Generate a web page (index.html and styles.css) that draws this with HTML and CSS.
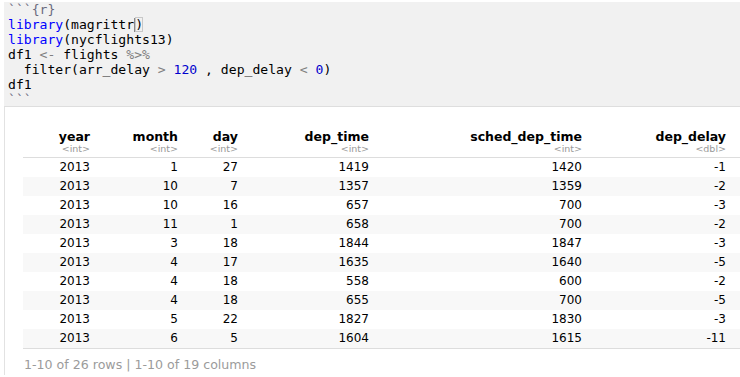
FILE: index.html
```html
<!DOCTYPE html>
<html>
<head>
<meta charset="utf-8">
<link rel="stylesheet" href="styles.css">
</head>
<body>
<div class="chunk">
<div class="line"><span class="hdr">```{r}</span></div>
<div class="line"><span class="kw">library</span>(magrittr<span class="cursor"></span><span class="match">)</span></div>
<div class="line"><span class="kw">library</span>(nycflights13)</div>
<div class="line">df1 <span class="op">&lt;-</span> flights <span class="op">%&gt;%</span></div>
<div class="line">  filter(arr_delay <span class="op">&gt;</span> <span class="num">120</span> , dep_delay <span class="op">&lt;</span> <span class="num">0</span>)</div>
<div class="line">df1</div>
<div class="line"><span class="hdr">```</span></div>
</div>
<div class="output">
  <table class="tbl">
    <colgroup>
      <col class="c1"><col class="c2"><col class="c3"><col class="c4"><col class="c5"><col class="c6"><col class="c7">
    </colgroup>
    <thead>
      <tr>
        <th><div class="name">year</div><div class="type">&lt;int&gt;</div></th>
        <th><div class="name">month</div><div class="type">&lt;int&gt;</div></th>
        <th><div class="name">day</div><div class="type">&lt;int&gt;</div></th>
        <th><div class="name">dep_time</div><div class="type">&lt;int&gt;</div></th>
        <th><div class="name">sched_dep_time</div><div class="type">&lt;int&gt;</div></th>
        <th><div class="name">dep_delay</div><div class="type">&lt;dbl&gt;</div></th>
        <th></th>
      </tr>
    </thead>
    <tbody>
      <tr><td>2013</td><td>1</td><td>27</td><td>1419</td><td>1420</td><td>-1</td><td></td></tr>
      <tr><td>2013</td><td>10</td><td>7</td><td>1357</td><td>1359</td><td>-2</td><td></td></tr>
      <tr><td>2013</td><td>10</td><td>16</td><td>657</td><td>700</td><td>-3</td><td></td></tr>
      <tr><td>2013</td><td>11</td><td>1</td><td>658</td><td>700</td><td>-2</td><td></td></tr>
      <tr><td>2013</td><td>3</td><td>18</td><td>1844</td><td>1847</td><td>-3</td><td></td></tr>
      <tr><td>2013</td><td>4</td><td>17</td><td>1635</td><td>1640</td><td>-5</td><td></td></tr>
      <tr><td>2013</td><td>4</td><td>18</td><td>558</td><td>600</td><td>-2</td><td></td></tr>
      <tr><td>2013</td><td>4</td><td>18</td><td>655</td><td>700</td><td>-5</td><td></td></tr>
      <tr><td>2013</td><td>5</td><td>22</td><td>1827</td><td>1830</td><td>-3</td><td></td></tr>
      <tr><td>2013</td><td>6</td><td>5</td><td>1604</td><td>1615</td><td>-11</td><td></td></tr>
    </tbody>
  </table>
  <div class="footer">1-10 of 26 rows | 1-10 of 19 columns</div>
</div>
</body>
</html>
```
FILE: styles.css
```css
html, body {
  margin: 0;
  padding: 0;
  background: #ffffff;
  overflow: hidden;
}
body {
  width: 740px;
  height: 377px;
}
.chunk {
  margin: 2px 0 0 4px;
  height: 104px;
  background: #f1f1f1;
  padding-left: 4px;
  font-family: "DejaVu Sans Mono", "Liberation Mono", monospace;
  font-size: 13.1px;
  line-height: 15px;
  color: #000000;
  overflow: hidden;
}
.line {
  white-space: pre;
  height: 15px;
}
.hdr { color: #6b6b80; }
.kw { color: #0000ff; }
.op { color: #808080; }
.num { color: #0000cd; }
.cursor {
  display: inline-block;
  width: 0;
  height: 14px;
  border-left: 1px solid #888888;
  vertical-align: -3px;
}
.match {
  outline: 1px solid #c8c8c8;
  outline-offset: -1px;
}
.output {
  margin-left: 4px;
  border-top: 1px solid #dedede;
  border-left: 1px solid #e2e2e2;
  background: #ffffff;
  height: 268px;
  padding-left: 18px;
  overflow: hidden;
  font-family: "DejaVu Sans", Verdana, sans-serif;
}
.tbl {
  margin-top: 23px;
  border-collapse: collapse;
  table-layout: fixed;
  width: 760px;
  font-size: 12px;
  color: #000000;
}
.c1 { width: 67px; }
.c2 { width: 88px; }
.c3 { width: 60px; }
.c4 { width: 131px; }
.c5 { width: 213px; }
.c6 { width: 144px; }
.c7 { width: 57px; }
.tbl th {
  text-align: right;
  padding: 0 0 4px 0;
  border-bottom: 1px solid #dddddd;
  vertical-align: bottom;
}
.name {
  font-weight: bold;
  font-size: 12.5px;
  line-height: 14px;
}
.type {
  font-weight: normal;
  font-size: 9.5px;
  line-height: 9px;
  color: #999999;
}
.tbl td {
  text-align: right;
  padding: 0;
  height: 19px;
  line-height: 19px;
  white-space: nowrap;
}
.tbl tbody tr:nth-child(even) td {
  background: #f8f8f8;
}
.tbl tbody tr:last-child td {
  border-bottom: 1px solid #dddddd;
}
.footer {
  margin-top: 8px;
  line-height: 16px;
  font-size: 12.6px;
  color: #9b9b9b;
  padding-left: 1px;
}
```
